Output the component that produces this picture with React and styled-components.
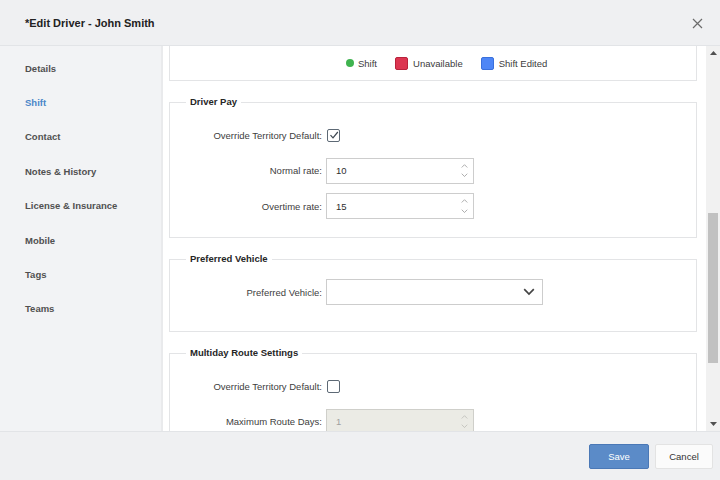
import React from "react";
import styled, { createGlobalStyle } from "styled-components";

const GlobalStyle = createGlobalStyle`
  html, body {
    margin: 0;
    padding: 0;
    background: #ffffff;
  }
  body {
    font-family: "Liberation Sans", Arial, sans-serif;
    font-size: 9.5px;
    color: #3a3a3a;
  }
`;

const navItems = [
  "Details",
  "Shift",
  "Contact",
  "Notes & History",
  "License & Insurance",
  "Mobile",
  "Tags",
  "Teams",
];

const Chevron = ({ dir = "down", size = 7, color = "#888", width = 1 }) => (
  <svg width={size} height={size * 0.6} viewBox="0 0 10 6">
    <polyline
      points={dir === "down" ? "1,1 5,5 9,1" : "1,5 5,1 9,5"}
      fill="none"
      stroke={color}
      strokeWidth={width}
    />
  </svg>
);

function NumberInput({ value, disabled }) {
  return (
    <NumberBox $disabled={disabled}>
      <span>{value}</span>
      <Spinner>
        <Chevron dir="up" color={disabled ? "#b5b5b0" : "#8a8a8a"} />
        <Chevron dir="down" color={disabled ? "#b5b5b0" : "#8a8a8a"} />
      </Spinner>
    </NumberBox>
  );
}

function Checkbox({ checked }) {
  return (
    <CheckBox>
      {checked && (
        <svg width="10" height="10" viewBox="0 0 10 10">
          <polyline
            points="1.5,5.2 4,7.8 8.8,2"
            fill="none"
            stroke="#3d4650"
            strokeWidth="1.2"
          />
        </svg>
      )}
    </CheckBox>
  );
}

export default function App() {
  return (
    <>
      <GlobalStyle />
      <Dialog>
        <Header>
          <Title>*Edit Driver - John Smith</Title>
          <CloseButton>
            <svg width="11" height="11" viewBox="0 0 11 11">
              <path d="M1 1 L10 10 M10 1 L1 10" stroke="#6b6b6b" strokeWidth="1.2" />
            </svg>
          </CloseButton>
        </Header>

        <Body>
          <Sidebar>
            {navItems.map((item) => (
              <NavItem key={item} $active={item === "Shift"}>
                {item}
              </NavItem>
            ))}
          </Sidebar>

          <Content>
            <Scroller>
              <LegendPanel>
                <LegendItem>
                  <Dot />
                  Shift
                </LegendItem>
                <LegendItem>
                  <Swatch $bg="#dc3550" $border="#b8223b" />
                  Unavailable
                </LegendItem>
                <LegendItem>
                  <Swatch $bg="#4e86f6" $border="#3a70dc" />
                  Shift Edited
                </LegendItem>
              </LegendPanel>

              <Section $pb={18}>
                <SectionTitle>Driver Pay</SectionTitle>
                <Row>
                  <Label>Override Territory Default:</Label>
                  <Checkbox checked />
                </Row>
                <Row>
                  <Label>Normal rate:</Label>
                  <NumberInput value="10" />
                </Row>
                <Row>
                  <Label>Overtime rate:</Label>
                  <NumberInput value="15" />
                </Row>
              </Section>

              <Section $pb={26}>
                <SectionTitle>Preferred Vehicle</SectionTitle>
                <Row>
                  <Label>Preferred Vehicle:</Label>
                  <Select>
                    <Chevron size={12} color="#444" width={1.4} />
                  </Select>
                </Row>
              </Section>

              <Section $pb={20}>
                <SectionTitle>Multiday Route Settings</SectionTitle>
                <Row>
                  <Label>Override Territory Default:</Label>
                  <Checkbox />
                </Row>
                <Row>
                  <Label>Maximum Route Days:</Label>
                  <NumberInput value="1" disabled />
                </Row>
              </Section>
            </Scroller>

            <ScrollBar>
              <ScrollArrow>
                <svg width="7" height="4" viewBox="0 0 7 4">
                  <polygon points="0,4 3.5,0 7,4" fill="#505050" />
                </svg>
              </ScrollArrow>
              <ScrollTrack>
                <Thumb />
              </ScrollTrack>
              <ScrollArrow>
                <svg width="7" height="4" viewBox="0 0 7 4">
                  <polygon points="0,0 7,0 3.5,4" fill="#505050" />
                </svg>
              </ScrollArrow>
            </ScrollBar>
          </Content>
        </Body>

        <Footer>
          <Button $primary>Save</Button>
          <Button>Cancel</Button>
        </Footer>
      </Dialog>
    </>
  );
}

// Layout

const Dialog = styled.div`
  width: 720px;
  height: 480px;
  display: flex;
  flex-direction: column;
  background: #ffffff;
  overflow: hidden;
`;

const Header = styled.div`
  height: 45px;
  flex: none;
  display: flex;
  align-items: center;
  justify-content: space-between;
  padding: 0 17px 0 25px;
  background: #eff0f2;
  border-bottom: 1px solid #e2e4e7;
`;

const Title = styled.div`
  font-size: 11px;
  font-weight: 700;
  color: #222;
  padding-top: 1px;
`;

const CloseButton = styled.div`
  display: flex;
  align-items: center;
  padding-top: 1px;
`;

const Body = styled.div`
  flex: 1;
  display: flex;
  min-height: 0;
`;

const Sidebar = styled.div`
  width: 161px;
  flex: none;
  padding-top: 5px;
  background: #f2f3f5;
  border-right: 2px solid #e9eaec;
`;

const NavItem = styled.div`
  height: 34.4px;
  display: flex;
  align-items: center;
  padding-left: 25px;
  font-weight: 700;
  color: ${(p) => (p.$active ? "#4a86c8" : "#505050")};
`;

const Content = styled.div`
  flex: 1;
  display: flex;
  min-width: 0;
`;

const Scroller = styled.div`
  flex: 1;
  overflow: hidden;
  padding: 0 9px 0 6px;
`;

// Panels

const LegendPanel = styled.div`
  height: 34px;
  display: flex;
  align-items: center;
  gap: 18px;
  padding-left: 176px;
  border: 1px solid #e3e4e6;
  border-top: none;
`;

const LegendItem = styled.div`
  display: flex;
  align-items: center;
  gap: 4px;
  color: #3c3c3c;
`;

const Dot = styled.span`
  width: 8px;
  height: 8px;
  border-radius: 50%;
  background: #3fb34f;
`;

const Swatch = styled.span`
  width: 11px;
  height: 11px;
  margin-right: 1px;
  border-radius: 2px;
  background: ${(p) => p.$bg};
  border: 1px solid ${(p) => p.$border};
`;

const Section = styled.fieldset`
  margin: 15px 0 0;
  padding: 14px 0 ${(p) => p.$pb}px;
  border: 1px solid #e3e4e6;
  display: flex;
  flex-direction: column;
  gap: 9.5px;
  min-width: 0;
`;

const SectionTitle = styled.legend`
  margin-left: 16px;
  padding: 0 4px;
  font-weight: 700;
  line-height: 12px;
  color: #262626;
`;

const Row = styled.div`
  display: flex;
  align-items: center;
  min-height: 26px;
`;

const Label = styled.label`
  width: 152px;
  flex: none;
  margin-right: 4px;
  text-align: right;
  color: #404040;
`;

// Controls

const CheckBox = styled.span`
  width: 11px;
  height: 11px;
  margin-left: 1px;
  display: flex;
  align-items: center;
  justify-content: center;
  border: 1px solid #5d6975;
  border-radius: 2px;
  background: #fff;
`;

const NumberBox = styled.div`
  height: 24px;
  display: flex;
  align-items: center;
  justify-content: space-between;
  padding: 0 5px 0 9px;
  box-sizing: content-box;
  width: 132px;
  border: 1px solid ${(p) => (p.$disabled ? "#cfcfca" : "#cdcdcd")};
  background: ${(p) => (p.$disabled ? "#ebebe5" : "#fff")};
  color: ${(p) => (p.$disabled ? "#a0a0a0" : "#2e2e2e")};
`;

const Spinner = styled.div`
  display: flex;
  flex-direction: column;
  gap: 5px;
`;

const Select = styled.div`
  width: 200px;
  height: 24px;
  display: flex;
  align-items: center;
  justify-content: flex-end;
  padding: 0 7px 0 8px;
  border: 1px solid #cdcdcd;
  background: #fff;
`;

// Scrollbar

const ScrollBar = styled.div`
  width: 14px;
  flex: none;
  display: flex;
  flex-direction: column;
  background: #f1f1f1;
`;

const ScrollArrow = styled.div`
  height: 14px;
  display: flex;
  align-items: center;
  justify-content: center;
`;

const ScrollTrack = styled.div`
  flex: 1;
  padding-top: 153px;
`;

const Thumb = styled.div`
  width: 10px;
  height: 150px;
  margin-left: 2px;
  background: #c1c1c1;
`;

// Footer

const Footer = styled.div`
  height: 48px;
  flex: none;
  display: flex;
  align-items: center;
  justify-content: flex-end;
  gap: 6px;
  padding: 0 7px 0 0;
  background: #eff0f2;
  border-top: 1px solid #e2e4e7;
`;

const Button = styled.button`
  height: 25px;
  padding: 0;
  width: ${(p) => (p.$primary ? "60px" : "58px")};
  font-family: "Liberation Sans", Arial, sans-serif;
  font-size: 9.5px;
  border-radius: 2px;
  border: 1px solid ${(p) => (p.$primary ? "#4a78b6" : "#e3e3e3")};
  background: ${(p) => (p.$primary ? "#5b8bc8" : "#fbfbfb")};
  color: ${(p) => (p.$primary ? "#ffffff" : "#333333")};
`;
